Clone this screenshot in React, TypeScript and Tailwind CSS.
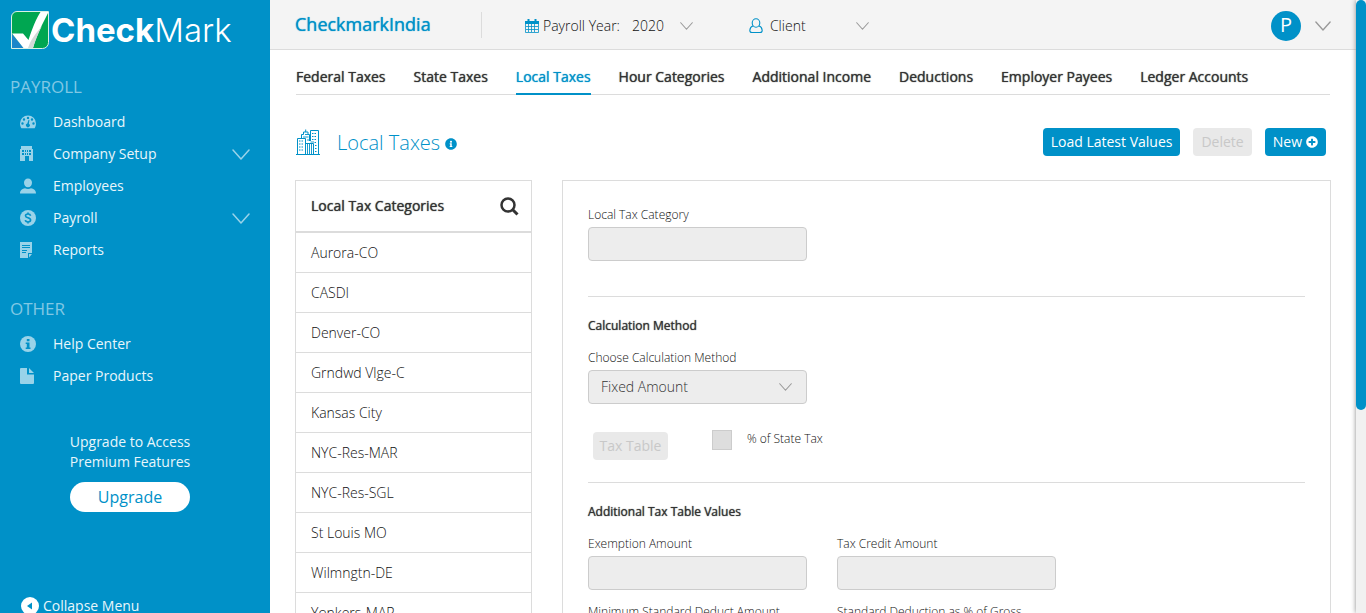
import React from "react";
import { FaInfoCircle, FaPlusCircle } from "react-icons/fa";

function Chevron({ className, width, height }: { className: string; width: number; height: number }) {
  return (
    <svg className={className} width={width} height={height} viewBox="0 0 18 11" fill="none" stroke="currentColor" aria-hidden="true">
      <path d="M1 1 L9 10 L17 1" strokeWidth="1.5" strokeLinecap="round" strokeLinejoin="round" />
    </svg>
  );
}

function Logo() {
  return (
    <svg width="38" height="38" viewBox="0 0 38 38" aria-hidden="true">
      <path d="M6 .5H37.500V31.500a6 6 0 0 1-6 6H.5V6A5.500 5.500 0 0 1 6 .5Z" fill="#00a651" stroke="#d9f1e6" />
      <path d="M1 23 L13 37 H1Z" fill="#1c86c9" />
      <path d="M1 22.500 H12 L17.500 29 C21 18 25 8 29.500 1 H37.500 C32 12 25.500 24 22 37 H12.500Z" fill="#fff" />
      <path d="M22 37 C24.500 29 27.500 21.500 31 15 C26 21 21 27.500 19 32 L17 37Z" fill="#d3d9d8" />
    </svg>
  );
}

const iconPaths: Record<string, React.ReactNode> = {
  dashboard: (
    <path
      fillRule="evenodd"
      d="M8 1.500A8 8 0 0 0 0 9.500C0 11.300.6 12.900 1.400 14.200H14.600C15.400 12.900 16 11.300 16 9.500A8 8 0 0 0 8 1.500ZM8 2.700a1.200 1.200 0 1 1 0 2.400a1.200 1.200 0 1 1 0-2.400ZM4 4.300a1.200 1.200 0 1 1 0 2.400a1.200 1.200 0 1 1 0-2.400ZM12 4.300a1.200 1.200 0 1 1 0 2.400a1.200 1.200 0 1 1 0-2.400ZM2.500 8.300a1.200 1.200 0 1 1 0 2.400a1.200 1.200 0 1 1 0-2.400ZM13.500 8.300a1.200 1.200 0 1 1 0 2.400a1.200 1.200 0 1 1 0-2.400ZM8.600 5.700L9.400 6L8.900 9.700A1.900 1.900 0 1 1 7.300 9.500Z"
    />
  ),
  company: (
    <path
      fillRule="evenodd"
      d="M1 0H12V3H13V15H9V10H5V15H0V3H1ZM2 4V6H4V4ZM5 4V6H6V4ZM7 4V6H8V4ZM9 4V6H11V4ZM2 7V9H4V7ZM5 7V9H6V7ZM7 7V9H8V7ZM9 7V9H11V7Z"
    />
  ),
  employees: <path d="M8 .5C10.300.5 12 2.200 12 4.700C12 7.200 10.300 9.300 8 9.300S4 7.200 4 4.700C4 2.200 5.700.5 8 .5ZM0 15.500C0 12 2.500 10.700 5 10.200C6.800 11.200 9.200 11.200 11 10.200C13.500 10.700 16 12 16 15.500Z" />,
  payroll: (
    <>
      <circle cx="8" cy="8" r="8" />
      <path d="M10.600 5.700C10.300 4.500 9.300 4 8 4C6.500 4 5.500 4.700 5.500 5.800C5.500 8.500 10.600 7.200 10.600 10.100C10.600 11.300 9.600 12 8 12C6.500 12 5.500 11.400 5.300 10.200M8 2.500V4M8 12V13.500" fill="none" stroke="#0091c8" strokeWidth="1.600" />
    </>
  ),
  reports: (
    <path fillRule="evenodd" d="M0 0H12V11H8V16H0ZM2 3V4H10V3ZM2 5V6H10V5ZM2 8V9H7V8ZM2 10V11H6V10ZM9 12H12L9 15.500Z" />
  ),
  help: (
    <>
      <circle cx="8" cy="8" r="8" />
      <path d="M6.800 3H9.500V5.300H6.800ZM5.700 6.500H9.500V11.500H10.500V13H5.700V11.500H6.800V8H5.700Z" fill="#0091c8" />
    </>
  ),
  paper: <path d="M1 0H7V6.500H14V15A1 1 0 0 1 13 16H1A1 1 0 0 1 0 15V1A1 1 0 0 1 1 0ZM9 0L14 5H9Z" />,
};

function NavItem({ icon, label, expandable }: { icon: string; label: string; expandable?: boolean }) {
  return (
    <li>
      <a href="#" className="flex h-8 items-center pl-5 pr-5 text-sm text-[#e8f6fb]">
        <svg width="16" height="16" viewBox="0 0 16 16" fill="#99d3e9" aria-hidden="true">
          {iconPaths[icon]}
        </svg>
        <span className="ml-[17px] flex-1 font-medium">{label}</span>
        {expandable && <Chevron className="text-[#99d3e9]" width={18} height={11} />}
      </a>
    </li>
  );
}

function Sidebar() {
  return (
    <aside className="flex w-[270px] shrink-0 flex-col bg-[#0091c8]">
      <a href="#" className="flex items-center gap-0.5 pl-[11px] pt-[11px] font-[Inter] text-[33px] leading-[38px] text-white">
        <Logo />
        <span>
          <b className="font-bold">Check</b>
          <span className="font-light">Mark</span>
        </span>
      </a>
      <h2 className="mt-[26px] pl-2.5 text-[17px] leading-6 text-[#80c8e4]">PAYROLL</h2>
      <ul className="mt-[7px]">
        <NavItem icon="dashboard" label="Dashboard" />
        <NavItem icon="company" label="Company Setup" expandable />
        <NavItem icon="employees" label="Employees" />
        <NavItem icon="payroll" label="Payroll" expandable />
        <NavItem icon="reports" label="Reports" />
      </ul>
      <h2 className="mt-[31px] pl-2.5 text-[17px] leading-6 text-[#80c8e4]">OTHER</h2>
      <ul className="mt-[7px]">
        <NavItem icon="help" label="Help Center" />
        <NavItem icon="paper" label="Paper Products" />
      </ul>
      <div className="mt-10 flex flex-col items-center pr-2.5 text-center text-sm leading-5 font-medium text-[#e8f6fb]">
        <p>
          Upgrade to Access
          <br />
          Premium Features
        </p>
        <button className="mt-2.5 h-[30px] w-[120px] rounded-full bg-white text-base font-normal text-[#0091c8]">Upgrade</button>
      </div>
      <button className="mt-[84px] flex items-center gap-1 pl-[21px] text-sm font-medium text-[#e8f6fb]">
        <svg width="18" height="18" viewBox="0 0 18 18" aria-hidden="true">
          <circle cx="9" cy="9" r="9" fill="#fff" />
          <path d="M11 5.500V12.500L6 9Z" fill="#0091c8" />
        </svg>
        Collapse Menu
      </button>
    </aside>
  );
}

function Header() {
  return (
    <header className="flex h-[50px] items-center border-b border-[#dcdcdc] bg-[#f4f4f4] px-[25px] pt-0.5 text-sm text-[#111]">
      <div className="mb-0.5 h-[26px] w-[187px] border-r border-[#dcdcdc] text-lg leading-6 text-[#0091c8] [text-shadow:0_0_1px_currentColor]">CheckmarkIndia</div>
      <button className="ml-[43px] flex items-center font-light">
        <svg width="14" height="14" viewBox="0 0 14 14" fill="none" stroke="#0091c8" aria-hidden="true">
          <path d="M.5 3V13.500H13.500V3M3.500 5V13M6.500 5V13M9.500 5V13M1 7.500H13M1 10.500H13" strokeWidth=".8" />
          <path d="M0 2H2.500V0H4.500V2H9.500V0H11.500V2H14V5H0Z" fill="#0091c8" stroke="none" />
        </svg>
        <span className="ml-1">Payroll Year:</span>
        <span className="ml-3">2020</span>
        <Chevron className="ml-4 text-[#999]" width={13} height={8} />
      </button>
      <button className="ml-14 flex items-center font-light">
        <svg width="14" height="16" viewBox="0 0 14 16" fill="none" stroke="#0091c8" strokeWidth="1.100" aria-hidden="true">
          <ellipse cx="7" cy="5" rx="3.800" ry="4.200" />
          <path d="M4.200 7.800C2 8.500 1 10 .8 12.500C.8 14 1.500 14.500 3 14.500H11C12.500 14.500 13.200 14 13.200 12.500C13 10 12 8.500 9.800 7.800" />
        </svg>
        <span className="ml-[7px]">Client</span>
        <Chevron className="ml-[50px] text-[#999]" width={13} height={8} />
      </button>
      <button className="ml-auto flex items-center gap-3.5" aria-label="Account">
        <span className="size-[30px] rounded-full bg-[#0091c8] text-center text-xl leading-7 text-white">P</span>
        <Chevron className="text-[#999]" width={16} height={10} />
      </button>
    </header>
  );
}

const tabs = ["Federal Taxes", "State Taxes", "Local Taxes", "Hour Categories", "Additional Income", "Deductions", "Employer Payees", "Ledger Accounts"];

const categories = ["Aurora-CO", "CASDI", "Denver-CO", "Grndwd Vlge-C", "Kansas City", "NYC-Res-MAR", "NYC-Res-SGL", "St Louis MO", "Wilmngtn-DE", "Yonkers-MAR"];

function CityIcon() {
  return (
    <svg width="24" height="27" viewBox="0 0 24 27" fill="none" stroke="#0091c8" aria-hidden="true">
      <path d="M0 25.500H24M1.500 25V9.500H9.500V25M5.500 9V5.500H7.500V3H12V5.500H13.500V12M9.700 3V.5M14.500 12V1.500H22.500V25M9.500 14.500H17.500V25" />
      <path d="M3 12H8M3 15H8M3 18H8M3 21H8M16 4.500H21M16 7.500H21M16 10.500H21M18.500 13.500H21M19 16.500H21M19 19.500H21M19 22.500H21" strokeDasharray="1.500 1" />
      <path d="M7 8H12.500M9 5.500H12M11 11H13M11.500 15V25M13.500 15V25M15.500 15V25M14.500 13H18" strokeWidth=".9" />
    </svg>
  );
}

function Field({ id, label }: { id: string; label: string }) {
  return (
    <div className="w-[219px]">
      <label htmlFor={id} className="block text-xs leading-4 font-light">
        {label}
      </label>
      <input id={id} disabled className="mt-1 block h-[34px] w-full rounded border border-[#ccc] bg-[#ededed] px-3" />
    </div>
  );
}

export default function App() {
  return (
    <div className="flex h-screen overflow-hidden bg-white font-['Open_Sans',sans-serif] text-[#111]">
      <Sidebar />
      <div className="min-w-0 flex-1">
        <Header />
        <main className="px-[25px]">
          <nav className="mx-px flex h-[45px] gap-7 border-b border-[#dcdcdc] pt-[17px] text-sm whitespace-nowrap text-[#333] [text-shadow:0_0_1px_currentColor]">
            {tabs.map((t) => (
              <a key={t} href="#" className={t === "Local Taxes" ? "h-7 border-b-2 border-[#0091c8] text-[#0091c8]" : "h-7"}>
                {t}
              </a>
            ))}
          </nav>
          <div className="mt-[33px] flex h-7 items-center text-sm">
            <span className="ml-px">
              <CityIcon />
            </span>
            <h1 className="mt-0.5 ml-[17px] text-xl leading-7 font-light text-[#0091c8]">Local Taxes</h1>
            <FaInfoCircle className="mt-1 ml-[5px] text-[#0091c8]" size={12} />
            <button className="ml-auto h-7 rounded bg-[#0091c8] px-2 text-white">Load Latest Values</button>
            <button disabled className="ml-[13px] h-7 rounded bg-[#e9e9e9] px-2 text-[#c8c8c8]">
              Delete
            </button>
            <button className="mr-[5px] ml-[13px] flex h-7 items-center gap-1 rounded bg-[#0091c8] px-2 text-white">
              New
              <FaPlusCircle size={12} />
            </button>
          </div>
          <div className="mt-6 flex items-start gap-[30px]">
            <section className="w-[237px] shrink-0 border border-[#dcdcdc]">
              <div className="flex h-[52px] items-center justify-between border-b-2 border-[#dcdcdc] pr-3 pl-[15px]">
                <h2 className="text-sm text-[#333] [text-shadow:0_0_1px_currentColor]">Local Tax Categories</h2>
                <button aria-label="Search">
                  <svg width="19" height="19" viewBox="0 0 19 19" fill="none" stroke="#333" aria-hidden="true">
                    <circle cx="8" cy="8" r="6.500" strokeWidth="2.500" />
                    <path d="M12.500 12.500L17.500 17.500" strokeWidth="3" />
                  </svg>
                </button>
              </div>
              <ul>
                {categories.map((c) => (
                  <li key={c} className="flex h-10 items-center border-b border-[#dcdcdc] pl-[15px] text-sm font-light">
                    {c}
                  </li>
                ))}
              </ul>
            </section>
            <form className="min-w-0 flex-1 border border-[#dcdcdc] px-[25px] pt-[26px]">
              <Field id="category" label="Local Tax Category" />
              <hr className="mt-[35px] border-[#dcdcdc]" />
              <h3 className="mt-[21px] text-xs leading-4 text-[#333] [text-shadow:0_0_1px_currentColor]">Calculation Method</h3>
              <label htmlFor="method" className="mt-4 block text-xs leading-4 font-light">
                Choose Calculation Method
              </label>
              <div className="relative mt-1 w-[219px]">
                <select id="method" disabled className="block h-[34px] w-full appearance-none rounded border border-[#ccc] bg-[#ededed] px-3 text-sm font-light text-[#333] opacity-100">
                  <option>Fixed Amount</option>
                </select>
                <Chevron className="pointer-events-none absolute top-[13px] right-[15px] text-[#999]" width={13} height={8} />
              </div>
              <div className="mt-[26px] flex items-start pl-[5px]">
                <button type="button" disabled className="mt-0.5 h-7 w-[75px] rounded bg-[#e9e9e9] text-sm text-[#c8c8c8]">
                  Tax Table
                </button>
                <input id="state-pct" type="checkbox" disabled className="ml-11 size-5 appearance-none border border-[#ccc] bg-[#ddd]" />
                <label htmlFor="state-pct" className="mt-px ml-[15px] text-xs leading-4 font-light">
                  % of State Tax
                </label>
              </div>
              <hr className="mt-[22px] border-[#dcdcdc]" />
              <h3 className="mt-[21px] text-xs leading-4 text-[#333] [text-shadow:0_0_1px_currentColor]">Additional Tax Table Values</h3>
              <div className="mt-4 grid grid-cols-[219px_219px] gap-x-[30px] gap-y-3.5">
                <Field id="exemption" label="Exemption Amount" />
                <Field id="credit" label="Tax Credit Amount" />
                <Field id="min-deduct" label="Minimum Standard Deduct Amount" />
                <Field id="std-deduct" label="Standard Deduction as % of Gross" />
              </div>
            </form>
          </div>
        </main>
      </div>
      <div className="w-2.5 shrink-0 bg-[#f1f1f1] shadow-[0_0_5px_#888]">
        <div className="h-[410px] rounded-full bg-[#0091c8]" />
      </div>
    </div>
  );
}
